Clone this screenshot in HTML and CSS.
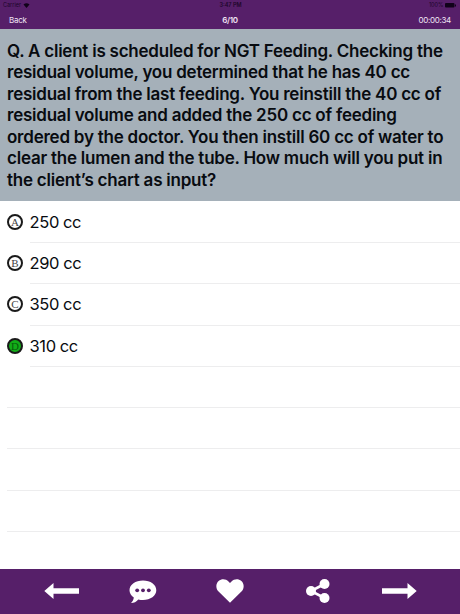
FILE: index.html
```
<!DOCTYPE html>
<html lang="en">
  <head>
    <meta charset="utf-8">
    <title>Quiz</title>
    <link rel="stylesheet" href="styles.css">
  </head>
  <body>
    <header>
      <div class="status">
        <span class="carrier">Carrier
          <svg width="7" height="5" viewBox="0 0 12 10"><path d="M0 3Q6 -2 12 3L6 10Z"/></svg>
        </span>
        <span class="clock">3:47 PM</span>
        <span class="battery">100%
          <svg width="11" height="5" viewBox="0 0 11 5"><rect width="9.5" height="4.6" rx="1"/><rect x="10" y="1.5" width="1" height="2"/></svg>
        </span>
      </div>
      <div class="nav">
        <span>Back</span>
        <span class="count">6/10</span>
        <span class="timer">00:00:34</span>
      </div>
    </header>

    <p class="question">
      Q. A client is scheduled for NGT Feeding. Checking the<br>
      residual volume, you determined that he has 40 cc<br>
      residual from the last feeding. You reinstill the 40 cc of<br>
      residual volume and added the 250 cc of feeding<br>
      ordered by the doctor. You then instill 60 cc of water to<br>
      clear the lumen and the tube. How much will you put in<br>
      the client’s chart as input?
    </p>

    <ul class="answers">
      <li><span class="letter">A</span><span class="text">250 cc</span></li>
      <li><span class="letter">B</span><span class="text">290 cc</span></li>
      <li><span class="letter">C</span><span class="text">350 cc</span></li>
      <li><span class="letter correct">D</span><span class="text">310 cc</span></li>
      <li class="empty"></li>
      <li class="empty"></li>
      <li class="empty"></li>
      <li class="empty"></li>
    </ul>

    <footer>
      <svg width="36" height="16" viewBox="0 0 36 16"><path d="M0.3 8L9.5 0V5.3H35V10.7H9.5V16Z"/></svg>
      <svg class="comment" width="28" height="24" viewBox="0 0 28 24">
        <path d="M14 0.6C21.5 0.6 27.3 4.8 27.3 10.3S21.5 20 14 20C12.3 20 10.8 19.8 9.3 19.4C7.3 21.7 5 22.9 2 23C3.6 21.4 4.6 19.7 4.8 17.4C2.1 15.6 0.5 13.2 0.5 10.3C0.5 4.8 6.5 0.6 14 0.6Z"/>
        <g class="dots"><circle cx="8.2" cy="10.3" r="1.9"/><circle cx="14" cy="10.3" r="1.9"/><circle cx="19.8" cy="10.3" r="1.9"/></g>
      </svg>
      <svg class="heart" width="28" height="24" viewBox="0 0 28 24"><path d="M14 23.8L2.3 12.3C-0.5 9.3 -0.2 4.5 2.6 2C5.6 -0.7 10 -0.2 12.5 2.4L14 4L15.5 2.4C18 -0.2 22.4 -0.7 25.4 2C28.2 4.5 28.5 9.3 25.7 12.3Z"/></svg>
      <svg class="share" width="24" height="24" viewBox="0 0 24 24">
        <path class="link" d="M18.5 5L5 12L18.5 19"/>
        <circle cx="18.5" cy="5" r="5"/><circle cx="5" cy="12" r="5"/><circle cx="18.5" cy="19" r="5"/>
      </svg>
      <svg class="next" width="36" height="16" viewBox="0 0 36 16"><path d="M35.7 8L26.5 0V5.3H1V10.7H26.5V16Z"/></svg>
    </footer>
  </body>
</html>
```

FILE: styles.css
```
* {
  box-sizing: border-box;
}

body {
  margin: 0;
  height: 614px;
  display: flex;
  flex-direction: column;
  overflow: hidden;
  background-color: white;
  color: #080b10;
  font-family: Inter, "Liberation Sans", sans-serif;
}

header {
  height: 29px;
  background-color: #561f69;
}

.status,
.nav {
  display: grid;
  grid-template-columns: 1fr 1fr 1fr;
  align-items: center;
}

.status {
  height: 10px;
  padding: 0 4px 0 3px;
  color: #1c0629;
  fill: #10021a;
  font-size: 5.5px;
}

.clock,
.count {
  text-align: center;
  font-weight: 600;
}

.clock {
  padding-left: 2px;
}

.battery,
.timer {
  text-align: right;
}

.status svg {
  vertical-align: -1px;
}

.nav {
  height: 19px;
  padding: 0 9px;
  color: #f0e4f4;
  font-size: 8px;
  letter-spacing: -0.3px;
}

.question {
  margin: 0;
  height: 172px;
  padding: 12px 0 0 7px;
  background-color: #a5b0b9;
  font-size: 17px;
  font-weight: 600;
  letter-spacing: -0.23px;
  line-height: 21.45px;
  white-space: nowrap;
}

.answers {
  flex: 1;
  margin: 0;
  padding: 0.7px 0 0 7px;
  list-style: none;
}

.answers li {
  display: flex;
  height: 41.3px;
  align-items: center;
}

.text {
  flex: 1;
  height: 100%;
  margin-left: 6.5px;
  border-bottom: 1px solid #ededee;
  font-size: 16.5px;
  letter-spacing: -0.35px;
  word-spacing: -0.3px;
  line-height: 40.5px;
}

.answers .empty {
  border-bottom: 1px solid #ededee;
}

.letter {
  width: 16px;
  height: 16px;
  margin-top: -1px;
  border: 2px solid #1a1a1a;
  border-radius: 50%;
  color: #444;
  font-family: "Liberation Serif", serif;
  font-size: 11px;
  line-height: 12px;
  text-align: center;
}

.correct {
  background-color: #12ad18;
  color: #075b0b;
}

footer {
  display: flex;
  height: 45px;
  padding: 0 0 1px 44px;
  align-items: center;
  background-color: #561f69;
  fill: white;
}

.comment {
  margin: 2px 0 0 48.5px;
}

.heart {
  margin-left: 59.5px;
}

.share {
  margin-left: 62px;
}

.next {
  margin-left: 50.5px;
}

.dots {
  fill: #561f69;
}

.link {
  fill: none;
  stroke: white;
  stroke-width: 2.6;
}
```
